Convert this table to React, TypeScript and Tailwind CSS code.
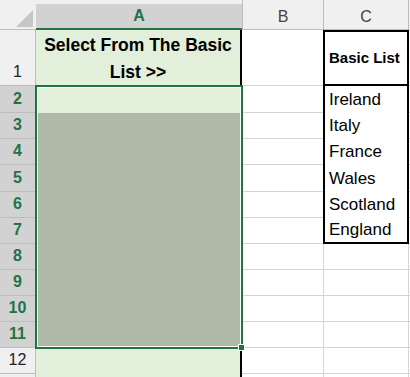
const rows = [
  { n: 1, h: "h-[56px]" },
  { n: 2, h: "h-[27px]" },
  { n: 3, h: "h-[26px]" },
  { n: 4, h: "h-[26px]" },
  { n: 5, h: "h-[27px]" },
  { n: 6, h: "h-[26px]" },
  { n: 7, h: "h-[26px]" },
  { n: 8, h: "h-[26px]" },
  { n: 9, h: "h-[26px]" },
  { n: 10, h: "h-[26px]" },
  { n: 11, h: "h-[26px]" },
  { n: 12, h: "h-[26px]" },
  { n: 13, h: "h-[26px]" },
];

const basicList = ["Ireland", "Italy", "France", "Wales", "Scotland", "England"];

function cCellClass(n: number) {
  if (n === 1) return "border-2 border-black";
  if (n >= 2 && n <= 6) return "border-x-2 border-black";
  if (n === 7) return "border-x-2 border-b-2 border-black";
  return "border-x border-b border-[#d4d4d4]";
}

export default function App() {
  return (
    <div className="relative w-[410px] h-[377px] overflow-hidden bg-white font-['Liberation_Sans',Arial,sans-serif] text-[#222]">
      {/* column headers */}
      <div className="flex h-[30px] bg-[#f0f0f0]">
        <div className="relative w-[36px] border-b border-[#bdbdbd]">
          <svg className="absolute left-[16px] top-[10px]" width="17" height="17" viewBox="0 0 17 17">
            <polygon points="17,0 17,17 0,17" fill="#c6c6c6" />
          </svg>
        </div>
        <div className="flex w-[206px] flex-col">
          <div className="h-[6px]" />
          <div className="flex flex-1 items-center justify-center border-b-2 border-[#217346] bg-[#d2d2d2] text-[16px] font-bold text-[#217346]">
            A
          </div>
        </div>
        <div className="flex w-[81px] flex-col">
          <div className="h-[6px] border-l border-[#bdbdbd]" />
          <div className="flex flex-1 items-center justify-center border-b border-l border-[#bdbdbd] text-[16px] text-[#444]">
            B
          </div>
        </div>
        <div className="flex w-[86px] flex-col">
          <div className="h-[6px] border-x border-[#bdbdbd]" />
          <div className="flex flex-1 items-center justify-center border-b border-x border-[#bdbdbd] text-[16px] text-[#444]">
            C
          </div>
        </div>
        <div className="flex-1 border-b border-[#bdbdbd]" />
      </div>

      {/* body rows */}
      {rows.map((r) => {
        const selected = r.n >= 2 && r.n <= 11;
        return (
          <div key={r.n} className={`flex ${r.h}`}>
            <div
              className={`flex w-[36px] items-end justify-center border-r border-b border-[#bdbdbd] pb-[4px] text-[16px] leading-[18px] ${
                selected ? "bg-[#d2d2d2] font-bold text-[#217346]" : "bg-[#f0f0f0] text-[#222]"
              }`}
            >
              {r.n <= 12 ? r.n : null}
            </div>
            <div className="flex w-[206px] items-center justify-center border-r-2 border-black bg-[#e2efda] px-1 pt-[2px] text-center text-[17.5px] font-bold leading-[27px] text-black">
              {r.n === 1 ? "Select From The Basic List >>" : null}
            </div>
            <div className="w-[81px] border-b border-[#d4d4d4]" />
            <div
              className={`flex w-[86px] items-center pl-[4px] text-black ${cCellClass(r.n)} ${
                r.n === 1 ? "text-[15px] font-bold" : "text-[17px]"
              }`}
            >
              {r.n === 1 ? "Basic List" : r.n <= 7 ? basicList[r.n - 2] : null}
            </div>
            <div className="flex-1 border-b border-[#d4d4d4]" />
          </div>
        );
      })}

      {/* selection A2:A11 */}
      <div className="absolute left-[35px] top-[85px] h-[264px] w-[208px] border-2 border-[#217346]">
        <div className="flex h-full flex-col border border-white">
          <div className="h-[25px]" />
          <div className="flex-1 bg-[#aeb9a8]" />
        </div>
      </div>
      <div className="absolute left-[238px] top-[344px] h-[7px] w-[7px] border border-white bg-[#217346]" />
    </div>
  );
}
